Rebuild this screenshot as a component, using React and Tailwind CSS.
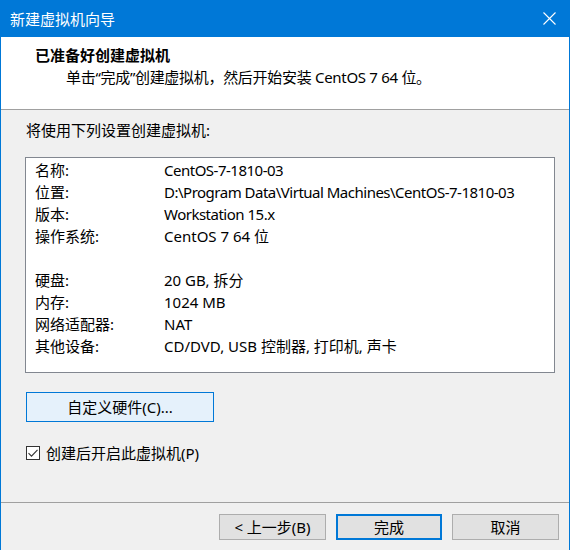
const rows = [
  ["名称:", "CentOS-7-1810-03", true],
  ["位置:", "D:\\Program Data\\Virtual Machines\\CentOS-7-1810-03", true],
  ["版本:", "Workstation 15.x", true],
  ["操作系统:", "CentOS 7 64 位"],
  null,
  ["硬盘:", "20 GB, 拆分"],
  ["内存:", "1024 MB"],
  ["网络适配器:", "NAT"],
  ["其他设备:", "CD/DVD, USB 控制器, 打印机, 声卡"],
];

const font = {
  fontFamily: '"Noto Sans", "Noto Sans CJK SC", sans-serif',
};

export default function App() {
  return (
    <div
      className="w-[570px] h-[550px] bg-[#f0f0f0] border-x border-[#0078d7] flex flex-col text-[15px] text-black overflow-hidden"
      style={font}
    >
      {/* title bar */}
      <div className="h-[37px] bg-[#0078d7] flex items-center justify-between pl-[9px] pr-[13px] shrink-0">
        <span className="text-white leading-[22px]">新建虚拟机向导</span>
        <svg width="13" height="13" viewBox="0 0 13 13" fill="none">
          <path d="M0.5 0.5 L12.5 12.5 M12.5 0.5 L0.5 12.5" stroke="white" strokeWidth="1.1" />
        </svg>
      </div>

      {/* header */}
      <div className="h-[73px] bg-white border-b border-[#a0a0a0] pl-[34px] pt-[7px] shrink-0">
        <div className="font-bold leading-[22px]">已准备好创建虚拟机</div>
        <div className="leading-[22px] pl-[31px] tracking-[-0.3px]">
          单击“完成”创建虚拟机，然后开始安装 CentOS 7 64 位。
        </div>
      </div>

      {/* body */}
      <div className="flex-1 flex flex-col pl-[24px]">
        <div className="leading-[22px] mt-[9px] pl-[1px]">将使用下列设置创建虚拟机:</div>

        <div className="mt-[16px] w-[530px] h-[216px] bg-white border border-[#828790] pt-[1px] pl-[9px]">
          {rows.map((r, i) =>
            r ? (
              <div key={i} className="flex leading-[22px] h-[22px] whitespace-nowrap">
                <span className="w-[129px] shrink-0">{r[0]}</span>
                <span className={r[2] ? "tracking-[-0.5px]" : ""}>{r[1]}</span>
              </div>
            ) : (
              <div key={i} className="h-[22px]" />
            )
          )}
        </div>

        <button className="mt-[19px] ml-[1px] w-[188px] h-[30px] bg-[#e5f1fb] border border-[#0078d7] flex items-center justify-center leading-[22px]">
          自定义硬件(C)...
        </button>

        <label className="mt-[20px] ml-[1px] flex items-center gap-[6px] leading-[22px]">
          <span className="w-[14px] h-[14px] bg-white border border-[#333333] flex items-center justify-center">
            <svg width="12" height="12" viewBox="0 0 12 12" fill="none">
              <path d="M1.5 6.2 L4.5 9.2 L10.5 2.8" stroke="#333333" strokeWidth="1.1" />
            </svg>
          </span>
          创建后开启此虚拟机(P)
        </label>
      </div>

      {/* footer */}
      <div className="h-[48px] border-t border-[#a0a0a0] flex items-start justify-end gap-[10px] pt-[11px] pr-[10px] shrink-0 -ml-[1px]">
        <button className="w-[107px] h-[26px] bg-[#e1e1e1] border border-[#adadad] flex items-center justify-center leading-[22px]">
          &lt; 上一步(B)
        </button>
        <button className="w-[106px] h-[26px] bg-[#e1e1e1] border-2 border-[#0078d7] flex items-center justify-center leading-[22px]">
          完成
        </button>
        <button className="w-[107px] h-[26px] bg-[#e1e1e1] border border-[#adadad] flex items-center justify-center leading-[22px]">
          取消
        </button>
      </div>
    </div>
  );
}
